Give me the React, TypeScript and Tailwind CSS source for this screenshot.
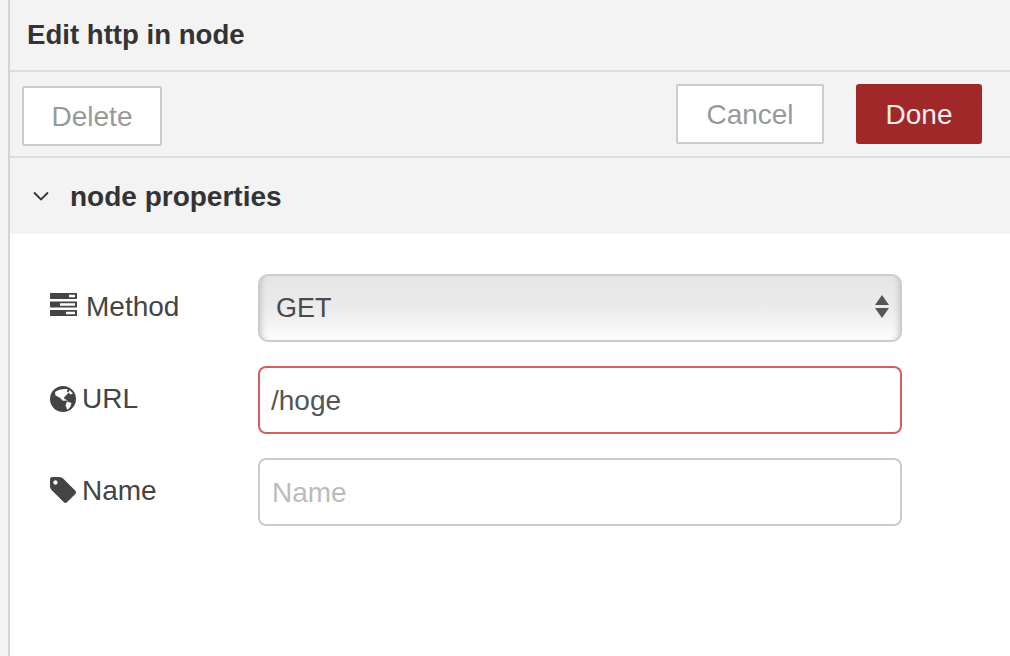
// Font Awesome 4 drawings; the packages only carry the newer versions of these
function TasksIcon() {
  return (
    <svg width="27" height="23" viewBox="0 0 27 23" className="shrink-0 mb-[5px]">
      <path
        fillRule="evenodd"
        fill="#444"
        d="M0 0h27v6H0z M19 1.8v2.4h6V1.8z M0 8.5h27v6H0z M10 10.3v2.4h15v-2.4z M0 17h27v6H0z M16 18.8v2.4h9v-2.4z"
      />
    </svg>
  );
}

function GlobeIcon() {
  return (
    <svg width="26" height="26" viewBox="0 0 26 26" className="shrink-0 mb-[1px]">
      <path
        fillRule="evenodd"
        fill="#444"
        d="M13 0a13 13 0 1 0 0 26a13 13 0 1 0 0-26z M5 6C8 3.5 13 2.5 17.5 3L17 6L19 6.5L16 9.5L14 11.5L14.5 13L18 14.5L13 14.8L9.5 11.5L5.5 9.5z M17 15.5L21.5 17L20.5 20.5L17.5 24L15.5 19.5z M19.5 4L23 7.5L20.5 8.5L18.5 6.5z"
      />
    </svg>
  );
}

function TagIcon() {
  return (
    <svg width="26" height="26" viewBox="128 128 1515 1515" className="shrink-0 mb-[3px] mr-[-1px]">
      <path
        fillRule="evenodd"
        fill="#444"
        d="M576 448q0-53-37.5-90.5t-90.5-37.5-90.5 37.5-37.5 90.5 37.5 90.5 90.5 37.5 90.5-37.5 37.5-90.5zm1067 576q0 53-37 90l-491 492q-39 37-91 37-53 0-90-37l-715-716q-38-37-64.5-101t-26.5-117v-416q0-52 38-90t90-38h416q53 0 117 26.5t102 64.5l715 714q37 39 37 91z"
      />
    </svg>
  );
}

function FieldLabel({ icon, text, gap }: { icon: React.ReactNode; text: string; gap: string }) {
  return (
    <label className={`w-[208px] shrink-0 pb-[2px] flex items-center text-[28px] leading-none text-[#444] ${gap}`}>
      {icon}
      <span>{text}</span>
    </label>
  );
}

export default function App() {
  return (
    <div className="w-[1010px] h-[656px] overflow-hidden bg-white font-['Liberation_Sans',Arial,sans-serif] flex">
      <div className="w-[8px] shrink-0 bg-[#f3f3f3]" />
      <div className="w-[2px] shrink-0 bg-[#d4d4d4]" />

      <div className="flex-1 flex flex-col min-w-0">
        <div className="h-[72px] shrink-0 bg-[#f3f3f3] border-b-2 border-[#dddddd] pl-[17px] pt-[18px] text-[27.6px] leading-[34px] font-bold text-[#333]">
          Edit http in node
        </div>

        <div className="h-[86px] shrink-0 bg-[#f3f3f3] border-b-2 border-[#dddddd] pl-[12px] pr-[28px] flex items-start">
          <button className="mt-[14px] pt-[2px] w-[140px] h-[60px] bg-white border-2 border-[#cccccc] rounded-[2px] text-[28px] text-[#999]">
            Delete
          </button>
          <div className="ml-auto mt-[12px] flex gap-[32px]">
            <button className="pt-[2px] w-[148px] h-[60px] bg-white border-2 border-[#cccccc] rounded-[2px] text-[28px] text-[#999]">
              Cancel
            </button>
            <button className="pt-[2px] w-[126px] h-[60px] bg-[#a02829] rounded-[3px] text-[28px] text-[#eeeeee]">
              Done
            </button>
          </div>
        </div>

        <div className="h-[76px] shrink-0 bg-[#f3f3f3] flex items-center pl-[23px]">
          <svg width="16" height="10" viewBox="0 0 16 10" className="shrink-0">
            <path d="M1 1.5l7 7 7-7" fill="none" stroke="#333" strokeWidth="1.8" />
          </svg>
          <span className="ml-[21px] pt-[2px] text-[28px] font-bold text-[#333] leading-none">node properties</span>
        </div>

        <div className="flex-1 bg-white pl-[40px] pt-[40px] flex flex-col gap-[24px]">
          <div className="flex items-center h-[68px]">
            <FieldLabel icon={<TasksIcon />} text="Method" gap="gap-[9px]" />
            <div className="relative w-[644px] h-[68px]">
              <select
                defaultValue="GET"
                className="appearance-none w-full h-full pl-[16px] rounded-[10px] border-2 border-[#cccccc] text-[27px] text-[#4a4a4a] bg-[linear-gradient(to_bottom,#e6e6e6,#ebebeb_50%,#fdfdfd)] shadow-[inset_7px_0_6px_-6px_#c4c4c4,inset_-7px_0_6px_-6px_#c4c4c4]"
              >
                <option>GET</option>
              </select>
              <div className="absolute right-[13px] top-[21px] flex flex-col gap-[3px] pointer-events-none">
                <div className="w-0 h-0 border-x-[7px] border-x-transparent border-b-[10px] border-b-[#555]" />
                <div className="w-0 h-0 border-x-[7px] border-x-transparent border-t-[10px] border-t-[#555]" />
              </div>
            </div>
          </div>

          <div className="flex items-center h-[68px]">
            <FieldLabel icon={<GlobeIcon />} text="URL" gap="gap-[6px]" />
            <input
              readOnly
              value="/hoge"
              className="w-[644px] h-[68px] pt-[2px] px-[11px] rounded-[8px] border-2 border-[#d0605e] bg-white text-[28px] text-[#555] outline-none"
            />
          </div>

          <div className="flex items-center h-[68px]">
            <FieldLabel icon={<TagIcon />} text="Name" gap="gap-[7px]" />
            <input
              readOnly
              placeholder="Name"
              className="w-[644px] h-[68px] pt-[2px] px-[12px] rounded-[8px] border-2 border-[#cccccc] bg-white text-[28px] text-[#555] placeholder:text-[#bbbbbb] outline-none"
            />
          </div>
        </div>
      </div>
    </div>
  );
}
